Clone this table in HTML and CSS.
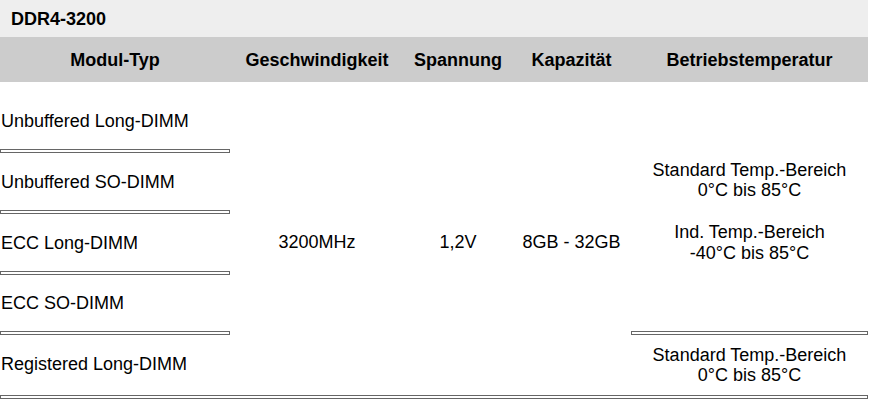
FILE: index.html
```html
<!DOCTYPE html>
<html lang="de">
<head>
<meta charset="utf-8">
<link rel="stylesheet" href="styles.css">
</head>
<body>
<div class="page">
  <div class="title">DDR4-3200</div>
  <div class="grid">
    <div class="th">Modul-Typ</div>
    <div class="th">Geschwindigkeit</div>
    <div class="th">Spannung</div>
    <div class="th">Kapazität</div>
    <div class="th">Betriebstemperatur</div>

    <div class="type r1 first"><span class="txt">Unbuffered Long-DIMM</span><div class="sep"></div></div>
    <div class="span c2">3200MHz</div>
    <div class="span c3">1,2V</div>
    <div class="span c4">8GB - 32GB</div>
    <div class="temp-main">
      <div class="temp-text">
        <div>Standard Temp.-Bereich</div>
        <div>0°C bis 85°C</div>
        <div class="blank"></div>
        <div>Ind. Temp.-Bereich</div>
        <div class="l2">-40°C bis 85°C</div>
      </div>
      <div class="sep"></div>
    </div>

    <div class="type r2"><span class="txt">Unbuffered SO-DIMM</span><div class="sep"></div></div>
    <div class="type r3"><span class="txt">ECC Long-DIMM</span><div class="sep"></div></div>
    <div class="type r4"><span class="txt">ECC SO-DIMM</span><div class="sep"></div></div>
    <div class="type r5 last"><span class="txt">Registered Long-DIMM</span></div>
    <div class="temp-last">
      <div>Standard Temp.-Bereich</div>
      <div>0°C bis 85°C</div>
    </div>
  </div>
  <div class="sep full"></div>
</div>
</body>
</html>
```

FILE: styles.css
```css
html, body {
  margin: 0;
  padding: 0;
  background: #ffffff;
}

body {
  font-family: "Liberation Sans", Arial, sans-serif;
  font-size: 18px;
  line-height: 20px;
  color: #000000;
}

.page {
  width: 868px;
}

.title {
  height: 37px;
  background: #eeeeee;
  font-weight: bold;
  padding-left: 11px;
  display: flex;
  align-items: center;
}

.grid {
  display: grid;
  grid-template-columns: 230px 174px 108px 119px 237px;
  grid-template-rows: 45px 71px 61px 61px 60px 60px;
}

.th {
  background: #cccccc;
  font-weight: bold;
  display: flex;
  align-items: center;
  justify-content: center;
  padding-top: 1px;
}

.sep {
  height: 2px;
  border: 1px solid #666666;
  flex: none;
}

.type {
  grid-column: 1;
  display: flex;
  flex-direction: column;
  justify-content: flex-end;
}

.type .txt {
  display: block;
  margin-bottom: 18px;
  padding-left: 1px;
}

.r1 { grid-row: 2; }
.r2 { grid-row: 3; }
.r3 { grid-row: 4; }
.r4 { grid-row: 5; }
.r5 { grid-row: 6; }

.type.last .txt {
  margin-bottom: 21px;
}

.span {
  grid-row: 2 / 7;
  display: flex;
  align-items: center;
  justify-content: center;
  padding-top: 7px;
}

.c2 { grid-column: 2; }
.c3 { grid-column: 3; }
.c4 { grid-column: 4; }

.temp-main {
  grid-column: 5;
  grid-row: 2 / 6;
  display: flex;
  flex-direction: column;
}

.temp-text {
  flex: 1;
  display: flex;
  flex-direction: column;
  justify-content: center;
  align-items: center;
  text-align: center;
  padding-top: 10px;
}

.blank {
  height: 22px;
}

.temp-text .l2 {
  margin-top: 1px;
}

.temp-last {
  grid-column: 5;
  grid-row: 6;
  display: flex;
  flex-direction: column;
  justify-content: center;
  align-items: center;
}

.sep.full {
  width: 866px;
}
```
